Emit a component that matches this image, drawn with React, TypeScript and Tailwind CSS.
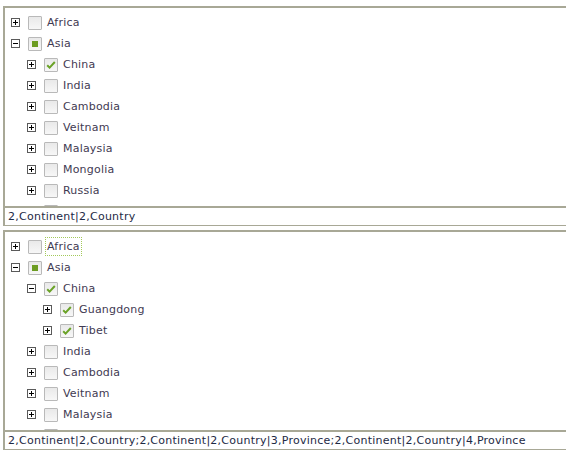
import React from "react";

type Node = {
  label: string;
  level: number;
  expanded?: boolean;
  state: "none" | "checked" | "partial";
  focused?: boolean;
};

const BORDER = "border-[#a8a896]";

function Expander({ expanded }: { expanded?: boolean }) {
  return (
    <svg width="9" height="9" viewBox="0 0 9 9" className="shrink-0 block">
      <rect x="0.5" y="0.5" width="8" height="8" fill="#ffffff" stroke="#5a5a5a" />
      <line x1="2" y1="4.5" x2="7" y2="4.5" stroke="#000000" />
      {!expanded && <line x1="4.5" y1="2" x2="4.5" y2="7" stroke="#000000" />}
    </svg>
  );
}

function Check({ state }: { state: Node["state"] }) {
  return (
    <div className="relative w-[14px] h-[14px] shrink-0 border border-[#b9b9b9] rounded-[1px] bg-gradient-to-b from-[#e9e9e9] to-[#f7f7f7]">
      {state === "partial" && (
        <div className="absolute left-[3px] top-[3px] w-[6px] h-[6px] bg-[#6c9c22]" />
      )}
      {state === "checked" && (
        <svg width="12" height="12" viewBox="0 0 12 12" className="absolute left-0 top-0">
          <path d="M2.2 6.2 L4.6 8.6 L9.8 3" fill="none" stroke="#6aa227" strokeWidth="2" />
        </svg>
      )}
    </div>
  );
}

function Row({ n }: { n: Node }) {
  const pad = ["pl-[6px]", "pl-[22px]", "pl-[38px]"][n.level];
  return (
    <div className={`flex items-center h-[21px] ${pad}`}>
      <Expander expanded={n.expanded} />
      <div className="w-[8px] shrink-0" />
      <Check state={n.state} />
      <div className="w-[4px] shrink-0" />
      {n.label && (
        <span
          className={`px-[1px] leading-[17px] text-[11px] tracking-[0.2px] text-[#3f3a52] whitespace-nowrap ${
            n.focused ? "outline outline-1 outline-dotted outline-[#a3c95a]" : ""
          }`}
        >
          {n.label}
        </span>
      )}
    </div>
  );
}

function Panel({ nodes, value }: { nodes: Node[]; value: string }) {
  return (
    <div className="ml-[3px]">
      <div className={`h-[200px] overflow-hidden border-t-2 border-l-2 ${BORDER} pt-[4px] bg-white`}>
        {nodes.map((n, i) => (
          <Row key={i} n={n} />
        ))}
      </div>
      <div
        className={`h-[20px] border-t-2 border-l-2 border-b ${BORDER} pl-[3px] flex items-center text-[11px] tracking-[0.25px] text-[#1d2a45] whitespace-nowrap overflow-hidden`}
      >
        <span className="leading-[14px]">{value}</span>
      </div>
    </div>
  );
}

const countries1 = ["India", "Cambodia", "Veitnam", "Malaysia", "Mongolia", "Russia", ""];
const countries2 = ["India", "Cambodia", "Veitnam", "Malaysia", ""];

const tree1: Node[] = [
  { label: "Africa", level: 0, state: "none" },
  { label: "Asia", level: 0, expanded: true, state: "partial" },
  { label: "China", level: 1, state: "checked" },
  ...countries1.map((c) => ({ label: c, level: 1, state: "none" as const })),
];

const tree2: Node[] = [
  { label: "Africa", level: 0, state: "none", focused: true },
  { label: "Asia", level: 0, expanded: true, state: "partial" },
  { label: "China", level: 1, expanded: true, state: "checked" },
  { label: "Guangdong", level: 2, state: "checked" },
  { label: "Tibet", level: 2, state: "checked" },
  ...countries2.map((c) => ({ label: c, level: 1, state: "none" as const })),
];

export default function App() {
  return (
    <div
      className="w-[566px] h-[454px] overflow-hidden bg-white pt-[6px]"
      style={{ fontFamily: '"DejaVu Sans", Verdana, sans-serif' }}
    >
      <Panel nodes={tree1} value="2,Continent|2,Country" />
      <div className="h-[4px]" />
      <Panel
        nodes={tree2}
        value="2,Continent|2,Country;2,Continent|2,Country|3,Province;2,Continent|2,Country|4,Province"
      />
    </div>
  );
}
